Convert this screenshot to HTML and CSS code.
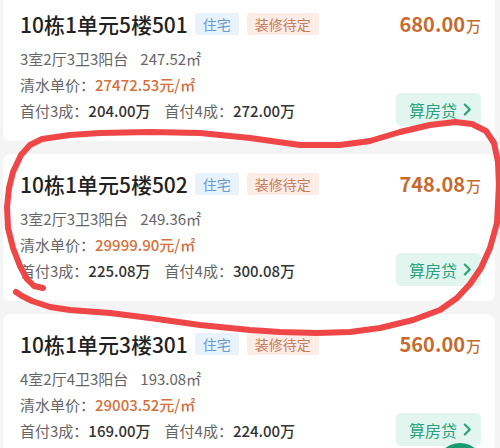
FILE: index.html
```html
<!DOCTYPE html>
<html lang="zh-CN">
<head>
  <meta charset="UTF-8" />
  <meta name="viewport" content="width=device-width, initial-scale=1.0"/>
  <title>房源列表</title>
  <link rel="stylesheet" href="styles.css">
</head>
<body>

  <div class="house-list">

    <div class="house-card">
      <div class="house-info">
        <div class="title-row">
          <span class="house-name">10栋1单元5楼501</span>
          <span class="tag tag-type">住宅</span>
          <span class="tag tag-deco">装修待定</span>
        </div>
        <div class="info-row">3室2厅3卫3阳台<span class="area">247.52㎡</span></div>
        <div class="info-row">清水单价：<span class="unit-price">27472.53元/㎡</span></div>
        <div class="info-row">首付3成：<span class="pay">204.00万</span><span class="pay-label">首付4成：</span><span class="pay">272.00万</span></div>
      </div>
      <div class="house-side">
        <div class="total-price">680.00<small>万</small></div>
        <a href="#" class="loan-btn">算房贷
          <svg class="chevron" viewBox="0 0 10 14" width="9" height="13"><path d="M2 1.5 L7.5 7 L2 12.5" /></svg>
        </a>
      </div>
    </div>

    <div class="house-card">
      <div class="house-info">
        <div class="title-row">
          <span class="house-name">10栋1单元5楼502</span>
          <span class="tag tag-type">住宅</span>
          <span class="tag tag-deco">装修待定</span>
        </div>
        <div class="info-row">3室2厅3卫3阳台<span class="area">249.36㎡</span></div>
        <div class="info-row">清水单价：<span class="unit-price">29999.90元/㎡</span></div>
        <div class="info-row">首付3成：<span class="pay">225.08万</span><span class="pay-label">首付4成：</span><span class="pay">300.08万</span></div>
      </div>
      <div class="house-side">
        <div class="total-price">748.08<small>万</small></div>
        <a href="#" class="loan-btn">算房贷
          <svg class="chevron" viewBox="0 0 10 14" width="9" height="13"><path d="M2 1.5 L7.5 7 L2 12.5" /></svg>
        </a>
      </div>
    </div>

    <div class="house-card">
      <div class="house-info">
        <div class="title-row">
          <span class="house-name">10栋1单元3楼301</span>
          <span class="tag tag-type">住宅</span>
          <span class="tag tag-deco">装修待定</span>
        </div>
        <div class="info-row">4室2厅4卫3阳台<span class="area">193.08㎡</span></div>
        <div class="info-row">清水单价：<span class="unit-price">29003.52元/㎡</span></div>
        <div class="info-row">首付3成：<span class="pay">169.00万</span><span class="pay-label">首付4成：</span><span class="pay">224.00万</span></div>
      </div>
      <div class="house-side">
        <div class="total-price">560.00<small>万</small></div>
        <a href="#" class="loan-btn">算房贷
          <svg class="chevron" viewBox="0 0 10 14" width="9" height="13"><path d="M2 1.5 L7.5 7 L2 12.5" /></svg>
        </a>
      </div>
    </div>

  </div>

  <!-- floating action button, mostly below the fold -->
  <div class="fab"></div>

  <!-- hand-drawn mark around the second card -->
  <svg class="scribble" viewBox="0 0 500 448" width="500" height="448">
    <polyline points="43,288 34,286 27,279 20,266 13,248 8,228 7,207 9,188 13,172 21,155 30,145 42,139 70,135 100,133 150,132 200,133 250,138 300,145 340,145 370,141 400,132 430,125 455,122 472,124 486,131 494,143 498,162 499,185 497,223 490,248 481,268 470,284 457,298 440,310 413,320 380,328 350,332 317,333 280,332 250,330 200,325 150,318 110,313 70,310 50,307 32,301 22,296 16,292" />
  </svg>

</body>
</html>
```

FILE: styles.css
```css
body {
  margin: 0;
  width: 500px;
  height: 448px;
  overflow: hidden;
  background: #f4f4f4;
  font-family: "Noto Sans CJK SC", "Noto Sans", sans-serif;
  color: #222;
  position: relative;
}

.house-list {
  display: flex;
  flex-direction: column;
  gap: 13px;
  margin-top: -6px;
  padding: 0 5px 0 3px;
}

.house-card {
  display: flex;
  justify-content: space-between;
  background: #fff;
  border-radius: 8px;
  padding: 16px 14px 15px 17px;
}

.house-info {
  display: flex;
  flex-direction: column;
  padding-bottom: 2px;
}

.title-row {
  display: flex;
  align-items: center;
  height: 28px;
  margin-bottom: 8px;
}

.house-name {
  font-size: 21px;
  font-weight: 500;
  color: #222;
  margin-right: 7px;
  white-space: nowrap;
}

.tag {
  font-size: 14px;
  line-height: 22px;
  padding: 0 8px;
  border-radius: 3px;
  margin-right: 8px;
  white-space: nowrap;
}

.tag-type {
  background: #e7f2fb;
  color: #6c9acb;
}

.tag-deco {
  background: #fcece6;
  color: #c77c5e;
}

.info-row {
  font-size: 15px;
  line-height: 26px;
  color: #666;
  white-space: nowrap;
}

.area {
  margin-left: 12px;
}

.unit-price {
  color: #d4703a;
  font-weight: 500;
}

.pay {
  color: #333;
  font-weight: 500;
}

.pay-label {
  margin-left: 14px;
}

.house-side {
  display: flex;
  flex-direction: column;
  justify-content: space-between;
  align-items: flex-end;
}

.total-price {
  font-size: 20px;
  line-height: 28px;
  font-weight: 600;
  color: #c76a2e;
  white-space: nowrap;
}

.total-price small {
  font-size: 15px;
  font-weight: 500;
  margin-left: 1px;
}

.loan-btn {
  display: flex;
  align-items: center;
  gap: 6px;
  height: 33px;
  padding: 0 9px 0 13px;
  background: #e2f5ee;
  color: #2aa27c;
  font-size: 16px;
  text-decoration: none;
  border-radius: 5px;
  white-space: nowrap;
}

.chevron path {
  fill: none;
  stroke: #2aa27c;
  stroke-width: 2.4;
  stroke-linecap: round;
  stroke-linejoin: round;
}

.fab {
  position: absolute;
  left: 436px;
  top: 443px;
  width: 48px;
  height: 48px;
  border-radius: 50%;
  background: #1c9a72;
}

.scribble {
  position: absolute;
  left: 0;
  top: 0;
  pointer-events: none;
}

.scribble polyline {
  fill: none;
  stroke: #ef4648;
  stroke-width: 6;
  stroke-linecap: round;
  stroke-linejoin: round;
}
```
